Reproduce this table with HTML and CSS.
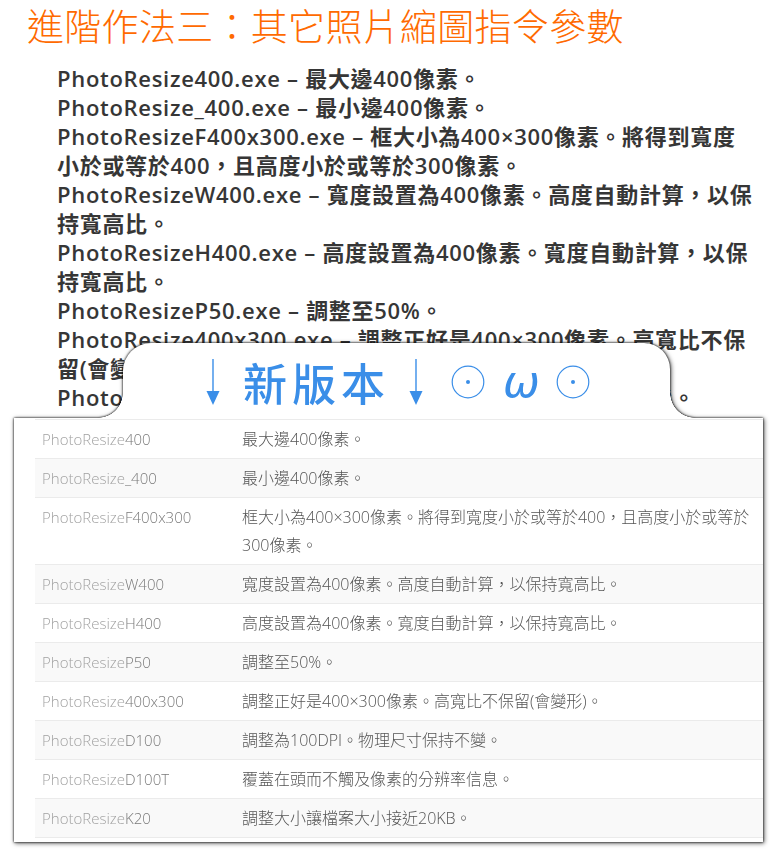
FILE: index.html
```html
<!DOCTYPE html>
<html lang="zh-Hant">
<head>
    <meta charset="UTF-8">
    <title>進階作法三：其它照片縮圖指令參數</title>
    <link rel="stylesheet" href="styles.css">
</head>
<body>
    <h2 class="title">進階作法三：其它照片縮圖指令參數</h2>

    <ul class="params">
        <li>PhotoResize400.exe – 最大邊400像素。</li>
        <li>PhotoResize_400.exe – 最小邊400像素。</li>
        <li>PhotoResizeF400x300.exe – 框大小為400×300像素。將得到寬度<br>小於或等於400，且高度小於或等於300像素。</li>
        <li>PhotoResizeW400.exe – 寬度設置為400像素。高度自動計算，以保<br>持寬高比。</li>
        <li>PhotoResizeH400.exe – 高度設置為400像素。寬度自動計算，以保<br>持寬高比。</li>
        <li>PhotoResizeP50.exe – 調整至50%。</li>
        <li>PhotoResize400x300.exe – 調整正好是400×300像素。高寬比不保<br>留(會變形)。</li>
        <li>PhotoResizeD100.exe – 調整為100DPI。物理尺寸保持不變。</li>
        <li>PhotoResizeD100T.exe</li>
    </ul>

    <!-- pasted screenshot of the new version -->
    <div class="shot">
        <div class="tab">
            <svg class="arrow" width="14" height="46" viewBox="0 0 14 46">
                <line x1="7" y1="0" x2="7" y2="34" stroke="#3a8ee8" stroke-width="1.4"/>
                <polygon points="0.5,32 13.5,32 7,46" fill="#3a8ee8"/>
            </svg>
            <span class="new">新版本</span>
            <svg class="arrow" width="14" height="46" viewBox="0 0 14 46">
                <line x1="7" y1="0" x2="7" y2="34" stroke="#3a8ee8" stroke-width="1.4"/>
                <polygon points="0.5,32 13.5,32 7,46" fill="#3a8ee8"/>
            </svg>
            <svg class="eye" width="34" height="34" viewBox="0 0 34 34">
                <circle cx="17" cy="17" r="15.8" fill="none" stroke="#3a8ee8" stroke-width="1.2"/>
                <circle cx="17" cy="17" r="2" fill="#3a8ee8"/>
            </svg>
            <span class="omega">ω</span>
            <svg class="eye" width="34" height="34" viewBox="0 0 34 34">
                <circle cx="17" cy="17" r="15.8" fill="none" stroke="#3a8ee8" stroke-width="1.2"/>
                <circle cx="17" cy="17" r="2" fill="#3a8ee8"/>
            </svg>
        </div>
        <div class="panel">
            <table class="cmd-table">
                <tr><td class="cmd"><span class="pre">PhotoResize</span><span class="suf">400</span></td><td>最大邊400像素。</td></tr>
                <tr><td class="cmd"><span class="pre">PhotoResize</span><span class="suf">_400</span></td><td>最小邊400像素。</td></tr>
                <tr><td class="cmd"><span class="pre">PhotoResize</span><span class="suf">F400x300</span></td><td>框大小為400×300像素。將得到寬度小於或等於400，且高度小於或等於300像素。</td></tr>
                <tr><td class="cmd"><span class="pre">PhotoResize</span><span class="suf">W400</span></td><td>寬度設置為400像素。高度自動計算，以保持寬高比。</td></tr>
                <tr><td class="cmd"><span class="pre">PhotoResize</span><span class="suf">H400</span></td><td>高度設置為400像素。寬度自動計算，以保持寬高比。</td></tr>
                <tr><td class="cmd"><span class="pre">PhotoResize</span><span class="suf">P50</span></td><td>調整至50%。</td></tr>
                <tr><td class="cmd"><span class="pre">PhotoResize</span><span class="suf">400x300</span></td><td>調整正好是400×300像素。高寬比不保留(會變形)。</td></tr>
                <tr><td class="cmd"><span class="pre">PhotoResize</span><span class="suf">D100</span></td><td>調整為100DPI。物理尺寸保持不變。</td></tr>
                <tr><td class="cmd"><span class="pre">PhotoResize</span><span class="suf">D100T</span></td><td>覆蓋在頭而不觸及像素的分辨率信息。</td></tr>
                <tr><td class="cmd"><span class="pre">PhotoResize</span><span class="suf">K20</span></td><td>調整大小讓檔案大小接近20KB。</td></tr>
            </table>
        </div>
    </div>
</body>
</html>
```

FILE: styles.css
```css
body {
    margin: 0;
    background: #fff;
    font-family: "Open Sans", "Noto Sans CJK TC", sans-serif;
    color: #444;
}

.title {
    margin: 0 0 0 27px;
    font-family: "Noto Sans CJK TC", sans-serif;
    font-size: 37px;
    font-weight: 300;
    line-height: 50px;
    letter-spacing: 0.3px;
    color: #ff6a00;
}

.params {
    list-style: none;
    margin: 14px 0 0;
    padding: 0 4px 0 57px;
    font-size: 22px;
    font-weight: 600;
    line-height: 29px;
    letter-spacing: 0.7px;
    color: #363636;
}

/* screenshot overlay */
.shot {
    position: absolute;
    left: 14px;
    top: 343px;
    width: 749px;
    z-index: 2;
    filter: drop-shadow(0 0 1px rgba(0, 0, 0, 1)) drop-shadow(1px 1px 2px rgba(0, 0, 0, 0.6));
}

.tab {
    position: relative;
    margin-left: 109px;
    width: 547px;
    height: 75px;
    box-sizing: border-box;
    padding: 3px 0 0 83px;
    background: #fff;
    border-radius: 28px 26px 0 0;
    display: flex;
    align-items: center;
    color: #3a8ee8;
}

.tab::before,
.tab::after {
    content: "";
    position: absolute;
    bottom: 0;
    width: 25px;
    height: 25px;
}

.tab::before {
    left: -25px;
    background: radial-gradient(circle at 0 0, transparent 24.5px, #fff 25px);
}

.tab::after {
    right: -25px;
    background: radial-gradient(circle at 100% 0, transparent 24.5px, #fff 25px);
}

.new {
    margin-left: 23px;
    font-family: "Noto Sans CJK TC", sans-serif;
    font-size: 44px;
    font-weight: 500;
    letter-spacing: 5px;
    line-height: 50px;
}

.tab .arrow + .new + .arrow {
    margin-left: 19px;
}

.eye {
    margin-left: 28px;
}

.omega {
    margin: 0 16px 0 18px;
    font-family: "DejaVu Sans", sans-serif;
    font-style: italic;
    font-size: 44px;
    line-height: 40px;
}

.omega + .eye {
    margin-left: 0;
}

.panel {
    height: 424px;
    box-sizing: border-box;
    padding: 1px 0 0 21px;
    background: #fff;
    overflow: hidden;
}

.cmd-table {
    width: 737px;
    border-collapse: collapse;
    font-size: 16px;
    font-weight: 300;
    line-height: 28px;
    color: #555;
}

.cmd-table td {
    padding: 5px 7px;
    border-top: 1px solid #ebebeb;
    border-bottom: 1px solid #ebebeb;
    vertical-align: top;
}

.cmd-table tr:nth-child(even) td {
    background: #f9f9f9;
}

.cmd-table .cmd {
    width: 186px;
    font-size: 15px;
}

.pre {
    color: #a2a2a2;
}

.suf {
    color: #7a7a7a;
}
```
